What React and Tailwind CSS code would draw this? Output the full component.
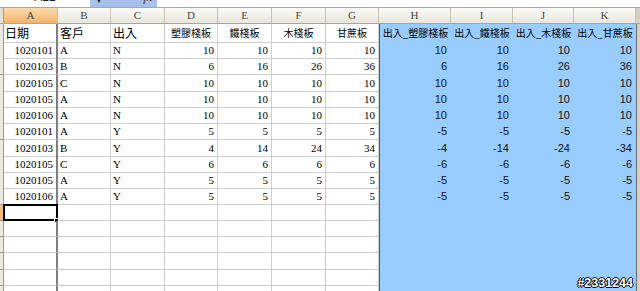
import React from 'react';

const GRID = 'grid grid-cols-[4px_54px_53px_54px_53px_54px_54px_53px_72px_62px_61px_62px_4px]';
const serif = "font-['Liberation_Serif','Noto_Sans_CJK_TC',serif]";
const cjk = "font-['Noto_Sans_CJK_TC','Liberation_Sans',sans-serif]";
const sans = "font-['Liberation_Sans',Arial,sans-serif]";

const rows = [
  ['1020101', 'A', 'N', 10, 10, 10, 10],
  ['1020103', 'B', 'N', 6, 16, 26, 36],
  ['1020105', 'C', 'N', 10, 10, 10, 10],
  ['1020105', 'A', 'N', 10, 10, 10, 10],
  ['1020106', 'A', 'N', 10, 10, 10, 10],
  ['1020101', 'A', 'Y', 5, 5, 5, 5],
  ['1020103', 'B', 'Y', 4, 14, 24, 34],
  ['1020105', 'C', 'Y', 6, 6, 6, 6],
  ['1020105', 'A', 'Y', 5, 5, 5, 5],
  ['1020106', 'A', 'Y', 5, 5, 5, 5],
];

const letters = ['A', 'B', 'C', 'D', 'E', 'F', 'G', 'H', 'I', 'J', 'K'];

function ColumnHeader() {
  return (
    <div className={`${GRID} h-[17px] border-t border-[#a9a79c] bg-gradient-to-b from-[#fbfbf8] to-[#e9e7dc] border-b border-b-[#a9a79c]`}>
      <div className="bg-[#e3e1d6] border-r border-[#9c9a8f]" />
      {letters.map((l) => (
        <div
          key={l}
          className={`flex items-center justify-center border-r border-[#c6c3b4] text-[11px] leading-none text-[#444] ${serif} ${
            l === 'A' ? 'bg-gradient-to-b from-[#fcd9ac] to-[#f4b46b]' : ''
          }`}
        >
          {l}
        </div>
      ))}
      <div className="bg-[#d4d0c8]" />
    </div>
  );
}

function TitleRow() {
  const mid = ['塑膠棧板', '鐵棧板', '木棧板', '甘蔗板'];
  return (
    <div className={`${GRID} h-[18px]`}>
      <div className="bg-[#ebe9df] border-r border-b border-[#9c9a8f]" />
      {['日期', '客戶', '出入'].map((t, i) => (
        <div
          key={t}
          className={`${cjk} text-[12px] leading-[18px] text-black border-b border-[#cfcfcf] ${
            i === 0 ? 'pl-[1px] border-r-2 border-r-[#7f7f7f]' : 'pl-[2px] border-r border-r-[#cfcfcf]'
          }`}
        >
          {t}
        </div>
      ))}
      {mid.map((t) => (
        <div key={t} className={`${cjk} text-[10px] leading-[18px] text-center text-black border-r border-b border-[#cfcfcf]`}>
          {t}
        </div>
      ))}
      {mid.map((t, i) => (
        <div
          key={'h' + t}
          className={`${cjk} text-[10px] leading-[18px] text-center text-black bg-[#99ccff] whitespace-nowrap ${
            i === 0 ? 'border-l border-[#4a5a70]' : ''
          }`}
        >
          出入_{t}
        </div>
      ))}
      <div className="bg-[#d4d0c8] border-l border-[#6b6b6b]" />
    </div>
  );
}

function DataRow({ r, selected }) {
  const empty = !r;
  const vals = empty ? [] : r;
  const sign = !empty && vals[2] === 'Y' ? -1 : 1;
  return (
    <div className={`${GRID} h-[16.25px]`}>
      <div
        className={`border-r border-b border-[#9c9a8f] ${selected ? 'bg-[#f6bc78]' : 'bg-[#ebe9df]'}`}
      />
      <div
        className={`relative ${serif} text-[11px] leading-[16px] text-right pr-[3px] border-b border-[#cfcfcf] border-r-2 border-r-[#7f7f7f]`}
      >
        {vals[0]}
        {selected && (
          <>
            <div className="absolute -left-[1px] -top-[1px] -right-[2px] -bottom-[1px] border-2 border-black" />
            <div className="absolute -right-[3px] -bottom-[3px] w-[5px] h-[5px] bg-black border border-white" />
          </>
        )}
      </div>
      <div className={`${serif} text-[11px] leading-[16px] pl-[2px] border-r border-b border-[#cfcfcf]`}>{vals[1]}</div>
      <div className={`${serif} text-[11px] leading-[16px] pl-[2px] border-r border-b border-[#cfcfcf]`}>{vals[2]}</div>
      {[3, 4, 5, 6].map((k) => (
        <div key={k} className={`${serif} text-[11px] leading-[16px] text-right pr-[3px] border-r border-b border-[#cfcfcf]`}>
          {vals[k]}
        </div>
      ))}
      {[3, 4, 5, 6].map((k, i) => (
        <div
          key={'b' + k}
          className={`${sans} text-[11px] leading-[16px] text-right pr-[4px] bg-[#99ccff] text-[#111] ${
            i === 0 ? 'border-l border-[#4a5a70]' : ''
          }`}
        >
          {empty ? '' : vals[k] * sign}
        </div>
      ))}
      <div className="bg-[#d4d0c8] border-l border-[#6b6b6b]" />
    </div>
  );
}

export default function App() {
  const blanks = Array.from({ length: 6 });
  return (
    <div className="relative w-[640px] h-[291px] overflow-hidden bg-white">
      <div className="flex h-[7px] overflow-hidden bg-white">
        <div className="w-[90px] flex justify-center">
          <span className={`${sans} text-[12px] leading-[12px] text-[#222] -translate-y-[9px]`}>A12</span>
        </div>
        <div className="w-[67px] bg-[#a9c1ea] flex justify-between px-[5px]">
          <span className="text-[8px] leading-[8px] text-[#222] -translate-y-[4px]">▼</span>
          <span className={`${serif} italic text-[12px] leading-[12px] text-[#222] -translate-y-[9px]`}>fx</span>
        </div>
        <div className="flex-1" />
      </div>
      <ColumnHeader />
      <TitleRow />
      {rows.map((r, i) => (
        <DataRow key={i} r={r} />
      ))}
      <DataRow selected />
      {blanks.map((_, i) => (
        <DataRow key={'e' + i} />
      ))}
      <div
        className={`absolute right-[7px] bottom-[2px] ${sans} font-bold text-[12.5px] leading-none text-white [text-shadow:-1px_0_0_#000,1px_0_0_#000,0_-1px_0_#000,0_1px_0_#000]`}
      >
        #2331244
      </div>
    </div>
  );
}
